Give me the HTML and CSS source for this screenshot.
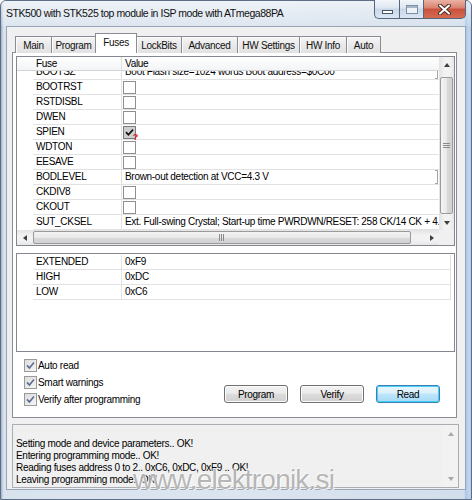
FILE: index.html
```html
<!DOCTYPE html>
<html>
<head>
<meta charset="utf-8">
<title>Fuses</title>
<link rel="stylesheet" href="styles.css">
</head>
<body>
<div class="window">
  <div class="titlebar">
    <div class="title">STK500 with STK525 top module in ISP mode with ATmega88PA</div>
    <div class="caption">
      <div class="cbtn cmin"><span class="gmin"></span></div>
      <div class="cbtn cmax"><span class="gmax"></span></div>
      <div class="cbtn cclose">
        <svg width="15" height="11" viewBox="0 0 15 11"><path d="M3 1.5 L12 9.5 M12 1.5 L3 9.5" stroke="#4a2a26" stroke-width="4" stroke-linecap="round" fill="none"/><path d="M3 1.5 L12 9.5 M12 1.5 L3 9.5" stroke="#ffffff" stroke-width="2" stroke-linecap="round" fill="none"/></svg>
      </div>
    </div>
  </div>
  <div class="client">
    <div class="tabs">
      <div class="tab w-main">Main</div>
      <div class="tab w-program">Program</div>
      <div class="tab w-fuses sel">Fuses</div>
      <div class="tab w-lock">LockBits</div>
      <div class="tab w-adv">Advanced</div>
      <div class="tab w-hws">HW Settings</div>
      <div class="tab w-hwi">HW Info</div>
      <div class="tab w-auto">Auto</div>
    </div>
    <div class="panel">
      <div class="grid fusegrid">
        <div class="grid-top">
          <div class="view">
            <div class="ghead">
              <div class="rh"></div>
              <div class="c1">Fuse</div>
              <div class="c2">Value</div>
            </div>
            <div class="clip">
              <div class="rows">
                <div class="row"><div class="rh"></div><div class="c1">BOOTSZ</div><div class="c2"><span class="txt">Boot Flash size=1024 words Boot address=$0C00</span><span class="combo"></span></div></div>
                <div class="row"><div class="rh"></div><div class="c1">BOOTRST</div><div class="c2"><span class="cb"></span></div></div>
                <div class="row"><div class="rh"></div><div class="c1">RSTDISBL</div><div class="c2"><span class="cb"></span></div></div>
                <div class="row"><div class="rh"></div><div class="c1">DWEN</div><div class="c2"><span class="cb"></span></div></div>
                <div class="row"><div class="rh"></div><div class="c1">SPIEN</div><div class="c2"><span class="cb cb-on"><svg width="9" height="9" viewBox="0 0 9 9"><path d="M1 4.2 L3.4 6.8 L8 1.6" stroke="#111" stroke-width="1.7" fill="none"/></svg><span class="q">?</span></span></div></div>
                <div class="row"><div class="rh"></div><div class="c1">WDTON</div><div class="c2"><span class="cb"></span></div></div>
                <div class="row"><div class="rh"></div><div class="c1">EESAVE</div><div class="c2"><span class="cb"></span></div></div>
                <div class="row"><div class="rh"></div><div class="c1">BODLEVEL</div><div class="c2"><span class="txt">Brown-out detection at VCC=4.3 V</span><span class="combo"></span></div></div>
                <div class="row"><div class="rh"></div><div class="c1">CKDIV8</div><div class="c2"><span class="cb"></span></div></div>
                <div class="row"><div class="rh"></div><div class="c1">CKOUT</div><div class="c2"><span class="cb"></span></div></div>
                <div class="row"><div class="rh"></div><div class="c1">SUT_CKSEL</div><div class="c2"><span class="txt">Ext. Full-swing Crystal; Start-up time PWRDWN/RESET: 258 CK/14 CK + 4.1 ms</span></div></div>
                <div class="row"><div class="rh"></div><div class="c1"></div><div class="c2"></div></div>
              </div>
            </div>
          </div>
          <div class="vscroll">
            <div class="sbtn"><span class="arr up"></span></div>
            <div class="vtrack"><div class="vthumb"><span class="hgrip"></span></div></div>
            <div class="sbtn"><span class="arr down"></span></div>
          </div>
        </div>
        <div class="hbar">
          <div class="hscroll">
            <div class="hbtn"><span class="arr left"></span></div>
            <div class="hthumb"><span class="vgrip"></span></div>
            <div class="htrack"></div>
            <div class="hbtn"><span class="arr right"></span></div>
          </div>
          <div class="corner"></div>
        </div>
      </div>

      <div class="grid bytegrid">
        <div class="row"><div class="rh"></div><div class="c1">EXTENDED</div><div class="c2">0xF9</div></div>
        <div class="row"><div class="rh"></div><div class="c1">HIGH</div><div class="c2">0xDC</div></div>
        <div class="row"><div class="rh"></div><div class="c1">LOW</div><div class="c2">0xC6</div></div>
      </div>

      <div class="options">
        <div class="checks">
          <label class="chk"><span class="box"><svg width="9" height="9" viewBox="0 0 9 9"><path d="M1 4.4 L3.4 7 L8 1.4" stroke="#5a6d8c" stroke-width="1.6" fill="none"/></svg></span>Auto read</label>
          <label class="chk"><span class="box"><svg width="9" height="9" viewBox="0 0 9 9"><path d="M1 4.4 L3.4 7 L8 1.4" stroke="#5a6d8c" stroke-width="1.6" fill="none"/></svg></span>Smart warnings</label>
          <label class="chk"><span class="box"><svg width="9" height="9" viewBox="0 0 9 9"><path d="M1 4.4 L3.4 7 L8 1.4" stroke="#5a6d8c" stroke-width="1.6" fill="none"/></svg></span>Verify after programming</label>
        </div>
        <div class="buttons">
          <div class="btn">Program</div>
          <div class="btn">Verify</div>
          <div class="btn def">Read</div>
        </div>
      </div>
    </div>

    <div class="log">
      <div class="logtext">
        <div>Setting mode and device parameters.. OK!</div>
        <div>Entering programming mode.. OK!</div>
        <div>Reading fuses address 0 to 2.. 0xC6, 0xDC, 0xF9 .. OK!</div>
        <div>Leaving programming mode.. OK!</div>
      </div>
      <div class="logscroll">
        <div class="lbtn"><span class="arr up dis"></span></div>
        <div class="ltrack"></div>
        <div class="lbtn"><span class="arr down dis"></span></div>
      </div>
    </div>
  </div>
  <div class="watermark">www.elektronik.si</div>
</div>
</body>
</html>
```

FILE: styles.css
```css
* { box-sizing: border-box; }
html, body { margin: 0; padding: 0; }
body {
  width: 472px; height: 500px; overflow: hidden; background: #ffffff;
  font-family: "Liberation Sans", Arial, sans-serif; font-size: 10px; color: #000;
}
.window {
  position: relative; width: 472px; height: 500px;
  display: flex; flex-direction: column;
  border: 1px solid #5d6e86; border-radius: 6px 6px 0 0;
  background: linear-gradient(90deg, #9fb0c6 0, #cfdbe9 2px, #d9e3ee 3px, #dbe4ef 50%, #d3deeb calc(100% - 7px), #a7c6ea calc(100% - 5px), #c2d7ef calc(100% - 2px), #b9c8da 100%);
}
.titlebar {
  height: 25px; flex: none; display: flex; align-items: flex-start;
  background: linear-gradient(rgba(255,255,255,0.55), rgba(255,255,255,0.1));
  border-radius: 5px 5px 0 0;
}
.title {
  padding: 6px 0 0 5px; font-size: 10.5px; letter-spacing: -0.45px; color: #111; white-space: nowrap;
}
.caption { display: flex; margin: -1px 5px 0 auto; height: 19px; }
.cbtn {
  height: 19px; border: 1px solid #55657c; border-top: none;
  display: flex; align-items: center; justify-content: center;
}
.cmin {
  width: 25px; border-right: none; border-radius: 0 0 0 5px;
  background: linear-gradient(#f3f6fa, #dde6f1 45%, #c9d6e6 50%, #dbe7f4);
  align-items: flex-end; padding-bottom: 4px;
}
.cmax {
  width: 24px; border-right: none;
  background: linear-gradient(#f3f6fa, #dde6f1 45%, #c9d6e6 50%, #dbe7f4);
}
.cclose {
  width: 43px; border-radius: 0 0 5px 0;
  background: linear-gradient(#eab2a4, #d9826f 45%, #c9523d 50%, #d66a50);
}
.gmin { width: 11px; height: 4px; background: #fff; border: 1px solid #45556c; }
.gmax { width: 12px; height: 9px; background: #eef2f7; border: 1px solid #7f8fa5; box-shadow: inset 0 2px 0 #a7b5c7; }

.client {
  flex: none; height: 464px; margin: 0 5px 0 5px;
  background: #f0f0f0; border: 1px solid #97a6b9;
  display: flex; flex-direction: column;
}
.tabs {
  display: flex; align-items: flex-end; height: 20px;
  margin: 6px 0 0 8px; position: relative; z-index: 1;
}
.tab {
  height: 17px; border: 1px solid #898c95; border-bottom: none; margin-left: -1px;
  background: linear-gradient(#f6f6f6, #e9e9e9 50%, #e2e2e2);
  box-shadow: inset 1px 1px 0 #fbfbfb;
  display: flex; align-items: center; justify-content: center;
  white-space: nowrap; letter-spacing: -0.3px; color: #111;
}
.tab:first-child { margin-left: 0; }
.tab.sel { height: 20px; background: #ffffff; box-shadow: none; padding-bottom: 2px; }
.w-main { width: 37px; }
.w-program { width: 45px; }
.w-fuses { width: 42px; }
.w-lock { width: 46px; }
.w-adv { width: 57px; }
.w-hws { width: 63px; }
.w-hwi { width: 48px; }
.w-auto { width: 35px; }

.panel {
  height: 366px; margin: -1px 8px 0 5px;
  border: 1px solid #898c95; background: #ffffff;
  display: flex; flex-direction: column;
}
.grid { border: 1px solid #828790; background: #fff; flex: none; }
.fusegrid { margin: 3px 1px 0 3px; height: 190px; display: flex; flex-direction: column; }
.grid-top { display: flex; height: 173px; }
.view { flex: 1; display: flex; flex-direction: column; min-width: 0; }
.ghead {
  height: 14px; display: flex; flex: none;
  background: linear-gradient(#ffffff, #f3f4f6);
  border-bottom: 1px solid #d5d5d5;
}
.ghead .c1 { border-right: 1px solid #e0e0e0; }
.rh { width: 16px; flex: none; }
.c1 { width: 89px; flex: none; padding-left: 3px; line-height: 14px; white-space: nowrap; letter-spacing: -0.3px; }
.c2 { flex: 1; min-width: 0; padding-left: 3px; line-height: 14px; white-space: nowrap; display: flex; align-items: center; letter-spacing: -0.3px; }
.clip { height: 159px; overflow: hidden; }
.rows { margin-top: -6px; }
.row { height: 15px; display: flex; }
.row .c1 { border-right: 1px solid #e2e2e2; border-bottom: 1px solid #e2e2e2; }
.row .c2 { border-bottom: 1px solid #e2e2e2; }
.txt { flex: 1; overflow: hidden; white-space: nowrap; }
.combo { width: 3px; height: 14px; flex: none; border: 1px solid #a5a5a5; border-left: none; margin-right: 1px; }
.cb {
  width: 13px; height: 13px; margin-left: -2px; border: 1px solid #8f8f8f; background: #fff;
  position: relative; display: flex; align-items: center; justify-content: center;
}
.cb-on { background: #cfcfcf; border-color: #7a7a7a; }
.q {
  position: absolute; right: -3px; bottom: -4px;
  font: bold 9px/9px "Liberation Sans", Arial, sans-serif; color: #e01010;
}

.vscroll {
  width: 15px; flex: none; display: flex; flex-direction: column;
  background: linear-gradient(90deg, #e3e3e3, #f2f2f2 35%, #f2f2f2 70%, #e6e6e6);
}
.sbtn { height: 16px; flex: none; display: flex; align-items: center; justify-content: center; }
.vscroll .sbtn:last-child { height: 14px; }
.vtrack { flex: 1; padding-top: 4px; padding-bottom: 2px; display: flex; }
.vthumb {
  flex: 1; margin: 0 1px; border: 1px solid #9a9a9a; border-radius: 2px;
  background: linear-gradient(90deg, #f4f4f4, #e9e9e9 50%, #dadada 50%, #d2d2d2);
  display: flex; align-items: center; justify-content: center;
}
.hgrip { width: 7px; height: 6px; background: repeating-linear-gradient(#8a8a8a 0, #8a8a8a 1px, transparent 1px, transparent 2px); }
.hbar { display: flex; height: 15px; flex: none; }
.hscroll {
  flex: 1; display: flex;
  background: linear-gradient(#e3e3e3, #f2f2f2 35%, #f2f2f2 70%, #e6e6e6);
}
.hbtn { width: 16px; flex: none; display: flex; align-items: center; justify-content: center; }
.hscroll .hbtn:last-child { width: 15px; }
.hthumb {
  width: 378px; flex: none; margin: 1px 0; border: 1px solid #9a9a9a; border-radius: 2px;
  background: linear-gradient(#f4f4f4, #e9e9e9 50%, #dadada 50%, #d2d2d2);
  display: flex; align-items: center; justify-content: center;
}
.vgrip { width: 6px; height: 7px; background: repeating-linear-gradient(90deg, #8a8a8a 0, #8a8a8a 1px, transparent 1px, transparent 2px); }
.htrack { flex: 1; }
.corner { width: 15px; flex: none; background: #f0f0f0; }

.arr { width: 0; height: 0; border: 3px solid transparent; }
.arr.up { border-bottom: 4px solid #3f3f3f; border-top: none; }
.arr.down { border-top: 4px solid #3f3f3f; border-bottom: none; }
.arr.left { border-right: 4px solid #3f3f3f; border-left: none; }
.arr.right { border-left: 4px solid #3f3f3f; border-right: none; }
.arr.up.dis { border-bottom-color: #a8a8a8; }
.arr.down.dis { border-top-color: #a8a8a8; }

.bytegrid { margin: 7px 1px 0 3px; height: 99px; padding-top: 1px; }
.bytegrid .row { margin-right: 3px; }
.bytegrid .row .c2 { border-right: 1px solid #e2e2e2; }

.options { display: flex; flex: 1; }
.checks { padding: 5px 0 0 11px; display: flex; flex-direction: column; }
.chk { height: 17px; display: flex; align-items: center; white-space: nowrap; letter-spacing: -0.3px; }
.box {
  width: 13px; height: 13px; margin-right: 1px; border: 1px solid #9a9a9a;
  background: linear-gradient(135deg, #dcdcdc, #f6f6f6);
  display: flex; align-items: center; justify-content: center;
}
.buttons { display: flex; gap: 12px; margin: 33px 16px 0 auto; align-self: flex-start; }
.btn {
  width: 64px; height: 18px; border: 1px solid #707070; border-radius: 3px;
  background: linear-gradient(#f2f2f2, #ebebeb 45%, #dddddd 50%, #cfcfcf);
  box-shadow: inset 0 0 0 1px #fbfbfb;
  display: flex; align-items: center; justify-content: center; letter-spacing: -0.3px;
}
.btn.def {
  border-color: #3c7fb1;
  background: linear-gradient(#eaf6fd, #d9f0fc 45%, #bee6fd 50%, #a7d9f5);
  box-shadow: inset 0 0 0 1px #48d1f7;
}

.log {
  height: 64px; margin: 6px 6px 0 5px; border: 1px solid #abadb3;
  background: #f0f0f0; display: flex;
}
.logtext { flex: 1; padding: 13px 0 0 3px; line-height: 12px; letter-spacing: -0.3px; white-space: nowrap; overflow: hidden; }
.logscroll { width: 15px; flex: none; display: flex; flex-direction: column; background: #f2f2f2; }
.lbtn { height: 17px; display: flex; align-items: center; justify-content: center; }
.ltrack { flex: 1; }

.watermark {
  position: absolute; left: 132px; top: 465px;
  font-family: "Liberation Sans", Arial, sans-serif; font-size: 28px; line-height: 1;
  letter-spacing: -0.8px; color: rgba(170,170,170,0.85);
  text-shadow: 1px 1px 0 rgba(255,255,255,0.8), -1px -1px 0 rgba(255,255,255,0.5);
  white-space: nowrap;
}
```
